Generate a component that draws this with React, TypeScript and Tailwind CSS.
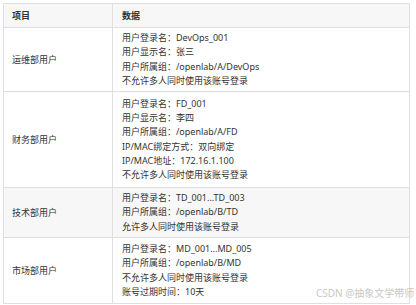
import React from "react";

const rows: { name: string; lines: string[]; h: string; bg: string }[] = [
  {
    name: "运维部用户",
    lines: ["用户登录名：DevOps_001", "用户显示名：张三", "用户所属组：/openlab/A/DevOps", "不允许多人同时使用该账号登录"],
    h: "h-[64px]",
    bg: "bg-white",
  },
  {
    name: "财务部用户",
    lines: [
      "用户登录名：FD_001",
      "用户显示名：李四",
      "用户所属组：/openlab/A/FD",
      "IP/MAC绑定方式：双向绑定",
      "IP/MAC地址：172.16.1.100",
      "不允许多人同时使用该账号登录",
    ],
    h: "h-[96px]",
    bg: "bg-white",
  },
  {
    name: "技术部用户",
    lines: ["用户登录名：TD_001...TD_003", "用户所属组：/openlab/B/TD", "允许多人同时使用该账号登录"],
    h: "h-[50px]",
    bg: "bg-[#f7f7f7]",
  },
  {
    name: "市场部用户",
    lines: ["用户登录名：MD_001...MD_005", "用户所属组：/openlab/B/MD", "不允许多人同时使用该账号登录", "账号过期时间：10天"],
    h: "h-[66px]",
    bg: "bg-white",
  },
];

export default function App() {
  return (
    <div
      className="relative w-[416px] h-[305px] overflow-hidden bg-white pt-[3px] pl-[3px] text-[#333333] text-[9px]"
      style={{ fontFamily: '"Noto Sans", "Noto Sans CJK SC", sans-serif' }}
    >
      <div className="w-[407px] border-l border-r border-t border-[#dfdfdf] box-border">
        <div className="flex h-[24px] border-b border-[#dfdfdf] bg-[#f7f7f7] box-border font-bold">
          <div className="w-[109px] border-r border-[#dfdfdf] box-border flex items-center pl-[8px]">项目</div>
          <div className="flex-1 flex items-center pl-[9px]">数据</div>
        </div>
        {rows.map((r) => (
          <div key={r.name} className={`flex ${r.h} border-b border-[#dfdfdf] box-border ${r.bg}`}>
            <div className="w-[109px] border-r border-[#dfdfdf] box-border flex items-center pl-[8px]">{r.name}</div>
            <div className="flex-1 flex flex-col justify-center pl-[9px] leading-[14.25px]">
              {r.lines.map((l) => (
                <div key={l}>{l}</div>
              ))}
            </div>
          </div>
        ))}
      </div>
      <div className="absolute left-[316px] top-[286px] text-[10px] leading-[14px] text-[#c8c8c8] whitespace-nowrap">
        CSDN @抽象文学带师
      </div>
    </div>
  );
}
